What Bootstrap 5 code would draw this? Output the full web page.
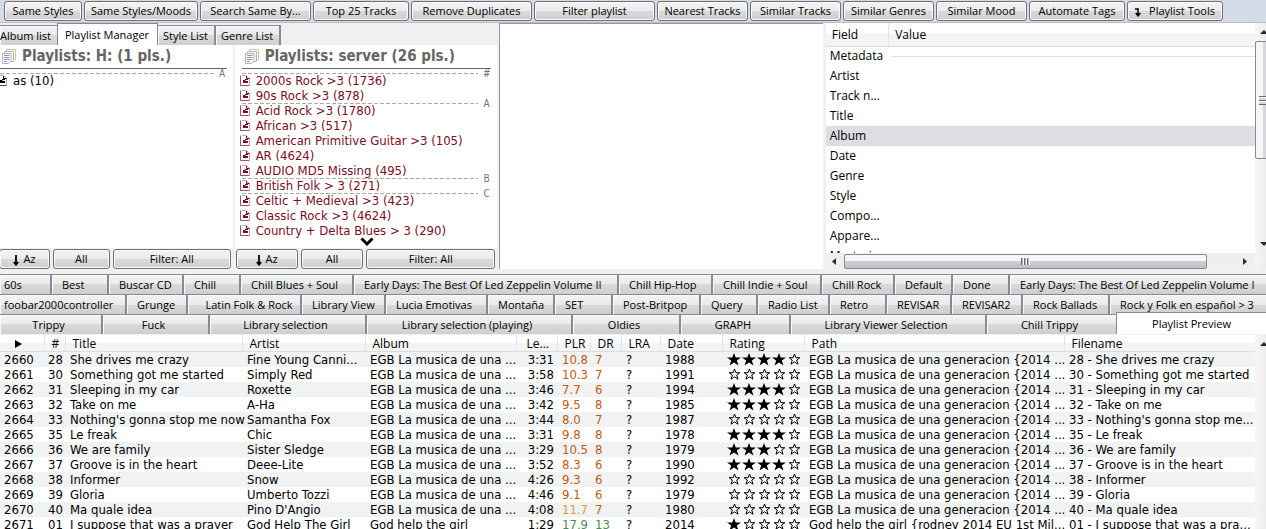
<!DOCTYPE html>
<html lang="en">
<head>
<meta charset="utf-8">
<meta name="viewport" content="width=device-width, initial-scale=1">
<title>foobar2000</title>
<link href="https://cdn.jsdelivr.net/npm/bootstrap@5.3.0/dist/css/bootstrap.min.css" rel="stylesheet">
<style>
  :root { --ui: "Open Sans", "Noto Sans", sans-serif; --listing: "DejaVu Sans Condensed", "DejaVu Sans", sans-serif; --edge: #868a96; }
  body { font-family: var(--ui); font-size: 11px; line-height: 16px; color: #000; background: #f0f0f0; }
  .face { background: linear-gradient(#f3f3f3, #ebebeb 50%, #dadada 50%, #cfcfcf); }
  .push { height: 20px; padding: 0; border: 1px solid #707070; border-radius: 3px; box-shadow: inset 0 0 0 1px #fafafa; color: #000; font-size: 11px; line-height: 16px; white-space: nowrap; min-width: 0; overflow: hidden; }
  .toolbar { display: grid; grid-template-columns: 78fr 114fr 111fr 96fr 121fr 121fr 91fr 91fr 91fr 91fr 96fr 96fr; gap: 2px; padding: 1px 43px 1px 4px; background: #d6dbeb; border-bottom: 1px solid #b8bcc8; }

  .left-col { flex: 500 1 0; min-width: 0; }
  .art-pane { flex: 323 1 0; background: #fff; border: solid #a090a4; border-width: 1px 0 0 1px; margin-bottom: 5px; }
  .prop-pane { flex: 441 1 0; min-width: 0; margin: 0 0 4px 3px; }

  .page-tabs { height: 22px; }
  .page-tab { height: 20px; border: solid var(--edge); border-width: 1px 1px 0 0; border-right-width: 2px; padding: 0 6px 0 5px; color: #000; line-height: 18px; box-shadow: inset 1px 1px #fafafa; }
  .page-tab.now { height: 22px; background: #fff; padding: 0 8px 0 7px; border-left-width: 1px; border-right-width: 1px; line-height: 20px; }

  .manager { display: grid; grid-template-columns: 235fr 265fr; flex-grow: 1; }
  .pl-pane { background: #fff; margin-right: 2px; }
  .pl-title { font: bold 15px/22px var(--listing); color: #666; height: 24px; padding: 0 0 0 22px; border-bottom: 1px solid #666; margin: 0 6px 4px 0; white-space: nowrap; position: relative; }
  .pl-title svg { position: absolute; left: 1px; top: 4px; }
  .second .pl-title, .second .pl-list { margin-left: 7px; }
  .second .pl-title { padding-left: 23px; }
  .second .pl-title svg { left: 2px; }
  .pl-list { font: 13px/15px var(--listing); list-style: none; padding: 0; margin: 0 6px 0 0; height: 175px; }
  .pl-list li { position: relative; padding-left: 13px; white-space: nowrap; height: 15px; color: #000; }
  .pl-list svg { position: absolute; left: -3px; top: 2px; }
  .second .pl-list li { color: #7c0c26; padding-left: 14px; }
  .second .pl-list svg { left: -2px; }
  .dash { position: absolute; left: 0; right: 13px; top: 0; height: 1px; background: repeating-linear-gradient(90deg, #a9a6bd 0 4px, transparent 4px 6px); }
  .initial { position: absolute; right: 0; top: -5px; width: 9px; text-align: center; font: 10px/12px var(--listing); color: #71718a; }
  .second .pl-list li .more { left: 118px; top: 14px; }
  .pl-foot { display: grid; gap: 3px; background: #f0f0f0; padding: 1px 0 5px; }
  .first .pl-foot { grid-template-columns: 51fr 57fr 118fr; padding-right: 2px; margin-left: -1px; }
  .second .pl-foot { grid-template-columns: 62fr 63fr 129fr; padding-left: 1px; padding-right: 2px; }

  .heads { background: linear-gradient(#fff 45%, #f3f4f6 46%); }
  .props { table-layout: fixed; width: 100%; font-size: 12px; line-height: 18px; }
  .props th { font-weight: 400; height: 23px; padding: 2px 6px 0; border-bottom: 1px solid #dcdde0; }
  .props th + th { border-left: 1px solid #e0e3e8; }
  .props th:first-child { width: 63px; }
  .props td { height: 20px; padding: 0 4px; white-space: nowrap; }
  .props tr.picked { background: #dfdde2; }
  .prop-list { flex: 1 1 auto; height: 0; overflow: hidden; background: #fff; }
  .rule { height: 1px; background: #e0e0e0; }
  .vbar { width: 11px; flex: none; overflow: hidden; background: linear-gradient(90deg, #f6f6f6, #ececec); }
  .vbar .knob { height: 118px; width: 17px; border: 1px solid #8c8795; border-radius: 2px; background: linear-gradient(90deg, #f6f6f6 45%, #d6d6dc 50%); padding: 54px 0 0 3px; }
  .grip-v { width: 9px; height: 9px; background: repeating-linear-gradient(#6c6676 0 1px, #fff 1px 2px, #d8d8dc 2px 4px); }
  .hbar { height: 17px; background: #efefef; }
  .hbar .knob { flex: 364 1 0; height: 15px; border: 1px solid #8c8795; border-radius: 2px; background: linear-gradient(#f6f6f6 45%, #cdcdd2 50%, #bfc0c6); }
  .hbar .after { flex: 40 1 0; }
  .grip-h { width: 9px; height: 7px; background: repeating-linear-gradient(90deg, #6c6676 0 1px, #b8b6c0 1px 2px, #fff 2px 3px); }

  .tab-row { display: grid; height: 20px; }
  .pl-tab { height: 20px; border: solid var(--edge); border-width: 1px 0 0 2px; padding: 0 0 0 10px; text-align: left; white-space: nowrap; color: #000; box-shadow: inset 1px 1px #fafafa; line-height: 18px; min-width: 0; overflow: hidden; }
  .pl-tab:first-child { border-left: 0; padding-left: 4px; }
  .row-a { grid-template-columns: 50fr 57fr 75fr 57fr 113fr 265fr 94fr 109fr 73fr 58fr 57fr 258fr; }
  .row-b { grid-template-columns: 125fr 61fr 114fr 84fr 102fr 67fr 58fr 88fr 57fr 72fr 57fr 65fr 71fr 87fr 158fr; }
  .row-c { grid-template-columns: 101fr 107fr 157fr 206fr 108fr 110fr 196fr 131fr 150fr; margin-bottom: 1px; }
  .row-c .pl-tab { text-align: center; padding: 0 4px 0 0; }
  .row-c .pl-tab.now { background: #fff; height: 22px; margin-top: -2px; border-left-width: 1px; position: relative; box-shadow: none; padding: 0; }

  .tracks { table-layout: fixed; width: 100%; font: 13px/15px var(--listing); }
  .tracks th { font: 12px/16px var(--ui); height: 17px; padding: 1px 0 0 7px; border: 0 solid #e0e3e8; border-width: 0 0 0 1px; box-shadow: inset 0 -1px #dcdde0; white-space: nowrap; }
  .tracks th:first-child { border-left: 0; padding-left: 15px; }
  .tracks td { height: 15px; padding: 0 0 0 5px; white-space: nowrap; }
  .tracks td:first-child, .tracks td:nth-child(2) { padding-left: 4px; }
  .tracks th:nth-child(6) { padding-left: 10px; }
  .tracks td:nth-child(6) { text-align: right; padding: 0 3px 0 0; }
  .tracks tbody tr:nth-child(odd) { background: #f0f2f4; }
  .tracks svg { display: block; }
  .low { color: #c05a10; } .mid { color: #dd9a3c; } .high { color: #4f8a5a; }
</style>
</head>
<body class="vh-100 overflow-hidden d-flex flex-column">
<svg class="d-none">
  <symbol id="full" viewBox="0 0 15 15"><path d="M7 1l1.700 4.400H14L9.800 8.500 11.500 13.500 7 10.500 2.500 13.500 4.200 8.500 0 5.400h5.300z" fill="#000"/></symbol>
  <symbol id="hollow" viewBox="0 0 15 15"><path d="M7.500 2l1.400 3.700h3.900L9.700 8l1.300 4.200L7.500 9.800 4 12.200 5.300 8 2.200 5.700h3.900z" fill="#fff" stroke="#000" stroke-width="1"/></symbol>
  <symbol id="page" viewBox="0 0 10 11"><path d="M.5.5v10h9" fill="none" stroke="currentColor" opacity=".7"/><path d="M2 .5h4l3.500 3v6.500" fill="none" stroke="#b7a9b4"/><path d="M6.500 1v2.500h3M3 5.500h2.500M3 7.500h5M3 6.500h5M5 4.500h3" fill="none" stroke="currentColor"/></symbol>
  <symbol id="stack" viewBox="0 0 15 15"><g fill="#fff" stroke="#d8c48c"><path d="M5.500.5h9v10h-9z"/><path d="M3.500 2.500h9v10h-9z" stroke="#9fbcd6"/><path d="M1.500 4.500h8.500v7l-2.500 3h-6z" stroke="#b7acc0"/></g><path d="M3 6.500h5.500M3 8.500h5.500M3 10.500h5.500M3 12.500h3" stroke="#9a8ea0"/></symbol>
  <symbol id="down" viewBox="0 0 6 11"><path d="M3 0v9M.8 7L3 9.700 5.200 7" fill="none" stroke="#000" stroke-width="1.800"/></symbol>
</svg>

<header class="toolbar">
  <button class="push face">Same Styles</button>
  <button class="push face">Same Styles/Moods</button>
  <button class="push face">Search Same By...</button>
  <button class="push face">Top 25 Tracks</button>
  <button class="push face">Remove Duplicates</button>
  <button class="push face">Filter playlist</button>
  <button class="push face">Nearest Tracks</button>
  <button class="push face">Similar Tracks</button>
  <button class="push face">Similar Genres</button>
  <button class="push face">Similar Mood</button>
  <button class="push face">Automate Tags</button>
  <button class="push face"><svg width="6" height="9" viewBox="0 0 6 9" class="me-2"><path d="M0 1h3v6M.8 5L3 7.800 5.500 5" fill="none" stroke="#000" stroke-width="1.500"/></svg>Playlist Tools</button>
</header>

<section class="d-flex">
  <div class="left-col d-flex flex-column">
    <nav class="page-tabs d-flex align-items-end">
      <button class="page-tab face ps-0 border-end-0">Album list</button>
      <button class="page-tab now">Playlist Manager</button>
      <button class="page-tab face">Style List</button>
      <button class="page-tab face">Genre List</button>
    </nav>
    <div class="manager">
      <div class="pl-pane first d-flex flex-column">
        <h2 class="pl-title"><svg width="15" height="15"><use href="#stack"/></svg>Playlists: H: (1 pls.)</h2>
        <ul class="pl-list">
          <li><span class="dash"></span><span class="initial">A</span><svg width="10" height="11"><use href="#page"/></svg>as (10)</li>
        </ul>
        <div class="pl-foot mt-auto">
          <button class="push face"><svg width="6" height="11" class="me-1"><use href="#down"/></svg>Az</button>
          <button class="push face">All</button>
          <button class="push face">Filter: All</button>
        </div>
      </div>
      <div class="pl-pane second d-flex flex-column">
        <h2 class="pl-title"><svg width="15" height="15"><use href="#stack"/></svg>Playlists: server (26 pls.)</h2>
        <ul class="pl-list" id="serverLists"></ul>
        <div class="pl-foot mt-auto">
          <button class="push face"><svg width="6" height="11" class="me-1"><use href="#down"/></svg>Az</button>
          <button class="push face">All</button>
          <button class="push face">Filter: All</button>
        </div>
      </div>
    </div>
  </div>

  <div class="art-pane"></div>

  <div class="prop-pane d-flex">
    <div class="d-flex flex-column flex-grow-1">
      <div class="prop-list">
        <table class="props">
          <thead class="heads"><tr><th>Field</th><th>Value</th></tr></thead>
          <tbody>
            <tr><td colspan="2" class="pe-0"><div class="d-flex align-items-center">Metadata<span class="rule flex-grow-1 ms-2"></span></div></td></tr>
            <tr><td>Artist</td><td></td></tr>
            <tr><td>Track n...</td><td></td></tr>
            <tr><td>Title</td><td></td></tr>
            <tr class="picked"><td>Album</td><td></td></tr>
            <tr><td>Date</td><td></td></tr>
            <tr><td>Genre</td><td></td></tr>
            <tr><td>Style</td><td></td></tr>
            <tr><td>Compo...</td><td></td></tr>
            <tr><td>Appare...</td><td></td></tr>
            <tr><td>Masterin...</td><td></td></tr>
          </tbody>
        </table>
      </div>
      <div class="hbar d-flex align-items-center">
        <svg width="18" height="7" viewBox="0 0 18 7"><path d="M10 0v7L6 3.500z" fill="#2b2433"/></svg>
        <div class="knob d-flex align-items-center justify-content-center"><span class="grip-h"></span></div>
        <div class="after d-flex justify-content-end pe-2"><svg width="4" height="7" viewBox="0 0 4 7"><path d="M0 0v7l4-3.500z" fill="#2b2433"/></svg></div>
      </div>
    </div>
    <div class="vbar d-flex flex-column">
      <svg width="11" height="18" viewBox="0 0 11 18"><path d="M5 11h8L9 7z" fill="#2b2433"/></svg>
      <div class="knob"><div class="grip-v"></div></div>
      <svg class="mt-auto mb-4" width="11" height="4" viewBox="0 0 11 4"><path d="M5 0h8L9 4z" fill="#2b2433"/></svg>
    </div>
  </div>
</section>

<nav>
  <div class="tab-row row-a">
    <button class="pl-tab face">60s</button><button class="pl-tab face">Best</button><button class="pl-tab face">Buscar CD</button><button class="pl-tab face">Chill</button><button class="pl-tab face">Chill Blues + Soul</button><button class="pl-tab face">Early Days: The Best Of Led Zeppelin Volume II</button><button class="pl-tab face">Chill Hip-Hop</button><button class="pl-tab face">Chill Indie + Soul</button><button class="pl-tab face">Chill Rock</button><button class="pl-tab face">Default</button><button class="pl-tab face">Done</button><button class="pl-tab face">Early Days: The Best Of Led Zeppelin Volume I</button>
  </div>
  <div class="tab-row row-b">
    <button class="pl-tab face">foobar2000controller</button><button class="pl-tab face">Grunge</button><button class="pl-tab face text-center">Latin Folk &amp; Rock</button><button class="pl-tab face">Library View</button><button class="pl-tab face">Lucia Emotivas</button><button class="pl-tab face">Montaña</button><button class="pl-tab face">SET</button><button class="pl-tab face">Post-Britpop</button><button class="pl-tab face">Query</button><button class="pl-tab face">Radio List</button><button class="pl-tab face">Retro</button><button class="pl-tab face">REVISAR</button><button class="pl-tab face">REVISAR2</button><button class="pl-tab face">Rock Ballads</button><button class="pl-tab face">Rock y Folk en español &gt; 3</button>
  </div>
  <div class="tab-row row-c">
    <button class="pl-tab face">Trippy</button><button class="pl-tab face">Fuck</button><button class="pl-tab face">Library selection</button><button class="pl-tab face">Library selection (playing)</button><button class="pl-tab face">Oldies</button><button class="pl-tab face">GRAPH</button><button class="pl-tab face">Library Viewer Selection</button><button class="pl-tab face">Chill Trippy</button><button class="pl-tab now">Playlist Preview</button>
  </div>
</nav>

<main class="d-flex flex-grow-1 overflow-hidden">
  <div class="flex-grow-1 bg-white">
    <table class="tracks">
      <colgroup>
        <col width="44"><col width="21"><col width="177"><col width="123"><col width="151"><col width="41"><col width="33"><col width="31"><col width="39"><col width="62"><col width="82"><col width="260"><col width="191">
      </colgroup>
      <thead class="heads"><tr>
        <th><svg width="7" height="8" viewBox="0 0 7 8"><path d="M0 0l7 4-7 4z"/></svg></th>
        <th>#</th><th>Title</th><th>Artist</th><th>Album</th><th>Le...</th><th>PLR</th><th>DR</th><th>LRA</th><th>Date</th><th>Rating</th><th>Path</th><th>Filename</th>
      </tr></thead>
      <tbody id="trackRows"></tbody>
    </table>
  </div>
  <div class="vbar"><svg width="11" height="18" viewBox="0 0 11 18"><path d="M5 11h8L9 7z" fill="#2b2433"/></svg></div>
</main>

<script src="https://cdn.jsdelivr.net/npm/bootstrap@5.3.0/dist/js/bootstrap.bundle.min.js"></script>
<script>
  // [name, separator initial]
  const playlists = [
    ['2000s Rock >3 (1736)', '#'], ['90s Rock >3 (878)'], ['Acid Rock >3 (1780)', 'A'], ['African >3 (517)'],
    ['American Primitive Guitar >3 (105)'], ['AR (4624)'], ['AUDIO MD5 Missing (495)'], ['British Folk > 3 (271)', 'B'],
    ['Celtic + Medieval >3 (423)', 'C'], ['Classic Rock >3 (4624)'], ['Country + Delta Blues > 3 (290)']
  ];
  document.getElementById('serverLists').innerHTML = playlists.map(([name, initial], i) =>
    `<li>${initial ? `<span class="dash"></span><span class="initial">${initial}</span>` : ''}` +
    `<svg width="10" height="11"><use href="#page"/></svg>${name.replace('>', '&gt;')}` +
    (i === playlists.length - 1 ? '<svg class="more" width="14" height="10" viewBox="0 0 14 10"><path d="M1.500 1.500L7 7l5.500-5.500" fill="none" stroke="#000" stroke-width="3"/></svg>' : '') +
    '</li>').join('');

  const egb = 'EGB La musica de una ...', egbPath = 'EGB La musica de una generacion {2014 ...';
  // [index, number, title, artist, album, length, PLR, DR, year, stars, path, filename title]
  const tracks = [
    [2660, '28', 'She drives me crazy', 'Fine Young Canni...', egb, '3:31', '10.8', '7', 1988, 4, egbPath],
    [2661, '30', 'Something got me started', 'Simply Red', egb, '3:58', '10.3', '7', 1991, 0, egbPath],
    [2662, '31', 'Sleeping in my car', 'Roxette', egb, '3:46', '7.7', '6', 1994, 4, egbPath],
    [2663, '32', 'Take on me', 'A-Ha', egb, '3:42', '9.5', '8', 1985, 3, egbPath],
    [2664, '33', "Nothing's gonna stop me now", 'Samantha Fox', egb, '3:44', '8.0', '7', 1987, 0, egbPath, "Nothing's gonna stop me..."],
    [2665, '35', 'Le freak', 'Chic', egb, '3:31', '9.8', '8', 1978, 4, egbPath],
    [2666, '36', 'We are family', 'Sister Sledge', egb, '3:29', '10.5', '8', 1979, 3, egbPath],
    [2667, '37', 'Groove is in the heart', 'Deee-Lite', egb, '3:52', '8.3', '6', 1990, 4, egbPath],
    [2668, '38', 'Informer', 'Snow', egb, '4:26', '9.3', '6', 1992, 0, egbPath],
    [2669, '39', 'Gloria', 'Umberto Tozzi', egb, '4:46', '9.1', '6', 1979, 0, egbPath],
    [2670, '40', 'Ma quale idea', "Pino D'Angio", egb, '4:08', '11.7', '7', 1980, 0, egbPath],
    [2671, '01', 'I suppose that was a prayer', 'God Help The Girl', 'God help the girl', '1:29', '17.9', '13', 2014, 1, 'God help the girl {rodney 2014 EU 1st Mil...', 'I suppose that was a pra...']
  ];
  const tone = v => v >= 13 ? 'high' : v >= 11 ? 'mid' : 'low';
  const stars = n => [0, 1, 2, 3, 4].map(i => `<svg width="15" height="15"><use href="#${i < n ? 'full' : 'hollow'}"/></svg>`).join('');
  document.getElementById('trackRows').innerHTML = tracks.map(([idx, no, title, artist, album, len, plr, dr, year, n, path, file]) =>
    `<tr><td>${idx}</td><td>${no}</td><td>${title}</td><td>${artist}</td><td>${album}</td><td>${len}</td>` +
    `<td class="${tone(plr)}">${plr}</td><td class="${tone(dr)}">${dr}</td><td>?</td><td>${year}</td>` +
    `<td><div class="d-flex">${stars(n)}</div></td><td>${path}</td><td>${no} - ${file || title}</td></tr>`).join('');
</script>
</body>
</html>
